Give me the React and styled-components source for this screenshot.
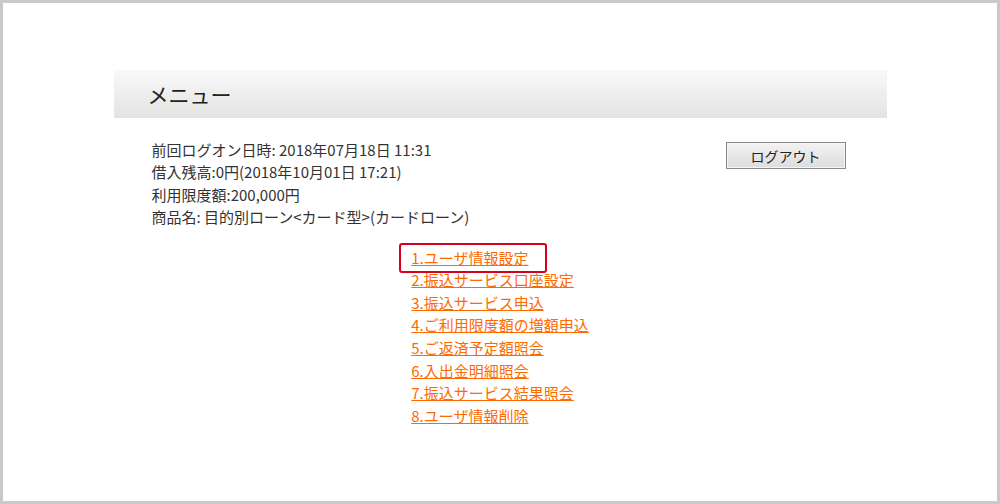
import React from "react";
import styled, { createGlobalStyle } from "styled-components";

const GlobalStyle = createGlobalStyle`
  html, body {
    margin: 0;
    padding: 0;
    background: #ffffff;
  }
  body {
    font-family: "Noto Sans CJK JP", "Liberation Sans", sans-serif;
    color: #333333;
  }
`;

const links = [
  "1.ユーザ情報設定",
  "2.振込サービス口座設定",
  "3.振込サービス申込",
  "4.ご利用限度額の増額申込",
  "5.ご返済予定額照会",
  "6.入出金明細照会",
  "7.振込サービス結果照会",
  "8.ユーザ情報削除",
];

export default function App() {
  return (
    <>
      <GlobalStyle />
      <Frame>
        <Panel>
          <MenuHeader>メニュー</MenuHeader>
          <InfoRow>
            <InfoList>
              <li>前回ログオン日時: 2018年07月18日 11:31</li>
              <li>借入残高:0円(2018年10月01日 17:21)</li>
              <li>利用限度額:200,000円</li>
              <li>商品名: 目的別ローン&lt;カード型&gt;(カードローン)</li>
            </InfoList>
            <LogoutButton type="button">ログアウト</LogoutButton>
          </InfoRow>
          <LinkList>
            {links.map((label, i) => (
              <li key={label}>
                <MenuLink href="#" $active={i === 0}>
                  {label}
                </MenuLink>
              </li>
            ))}
          </LinkList>
        </Panel>
      </Frame>
    </>
  );
}

const Frame = styled.div`
  box-sizing: border-box;
  width: 1000px;
  height: 504px;
  border: 3px solid #c9c9c9;
  background: #ffffff;
  padding-top: 67px;
`;

const Panel = styled.div`
  width: 773px;
  margin: 0 auto;
`;

const MenuHeader = styled.h1`
  margin: 0;
  height: 48px;
  line-height: 48px;
  padding-left: 34px;
  font-size: 21px;
  font-weight: normal;
  color: #222222;
  background: linear-gradient(to bottom, #f9f9f9 0%, #e3e3e3 100%);
`;

const InfoRow = styled.div`
  display: flex;
  justify-content: space-between;
  align-items: flex-start;
  padding: 21px 41px 0 38px;
`;

const InfoList = styled.ul`
  list-style: none;
  margin: 0;
  padding: 0;
  font-size: 15px;
  line-height: 22.4px;
  color: #333333;
`;

const LogoutButton = styled.button`
  width: 120px;
  height: 27px;
  margin-top: 3px;
  padding: 0;
  font-family: "Noto Sans CJK JP", "Liberation Sans", sans-serif;
  font-size: 14px;
  color: #222222;
  border: 1px solid #8a8a8a;
  box-shadow: inset 0 0 0 1px #f4f4f4;
  background: linear-gradient(to bottom, #f3f3f3 0%, #dcdcdc 100%);
`;

const LinkList = styled.ul`
  list-style: none;
  margin: 18px auto 0;
  padding: 0;
  width: fit-content;
  font-size: 15px;
  line-height: 22.6px;
`;

const MenuLink = styled.a`
  position: relative;
  color: #ff6a00;
  text-decoration: underline;

  &::before {
    content: "";
    display: ${(p) => (p.$active ? "block" : "none")};
    position: absolute;
    left: -12px;
    top: -4px;
    width: 148px;
    height: 30px;
    border: 2px solid #d7001e;
    border-radius: 3px;
    box-sizing: border-box;
  }
`;
